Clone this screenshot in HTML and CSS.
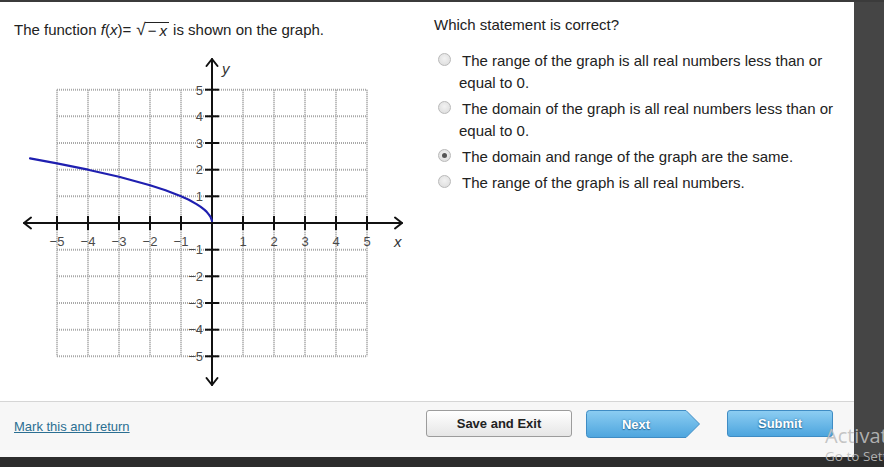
FILE: index.html
```html
<!DOCTYPE html>
<html lang="en">
<head>
<meta charset="utf-8">
<title>Question</title>
<link rel="stylesheet" href="styles.css">
</head>
<body>
<div class="screen">
  <div class="top">
    <div class="main">
      <div class="content">
        <div class="left">
          <p class="question">The function <i>f</i>(<i>x</i>)= <span class="sqrt"><span class="rad">√</span><span class="radicand">−&#8201;<i>x</i></span></span> is shown on the graph.</p>
          <svg class="graph" width="420" height="345" viewBox="0 50 420 345" xmlns="http://www.w3.org/2000/svg">
            <g stroke="#a9a9a9" stroke-width="2" stroke-dasharray="1 1" fill="none">
              <line x1="57" y1="87.7" x2="57" y2="354.3"/>
              <line x1="88" y1="87.7" x2="88" y2="354.3"/>
              <line x1="119" y1="87.7" x2="119" y2="354.3"/>
              <line x1="150" y1="87.7" x2="150" y2="354.3"/>
              <line x1="181" y1="87.7" x2="181" y2="354.3"/>
              <line x1="243" y1="87.7" x2="243" y2="354.3"/>
              <line x1="274" y1="87.7" x2="274" y2="354.3"/>
              <line x1="305" y1="87.7" x2="305" y2="354.3"/>
              <line x1="336" y1="87.7" x2="336" y2="354.3"/>
              <line x1="367" y1="87.7" x2="367" y2="354.3"/>
              <line x1="57" y1="87.7" x2="367" y2="87.7"/>
              <line x1="57" y1="114.3" x2="367" y2="114.3"/>
              <line x1="57" y1="141" x2="367" y2="141"/>
              <line x1="57" y1="167.7" x2="367" y2="167.7"/>
              <line x1="57" y1="194.3" x2="367" y2="194.3"/>
              <line x1="57" y1="247.7" x2="367" y2="247.7"/>
              <line x1="57" y1="274.3" x2="367" y2="274.3"/>
              <line x1="57" y1="301" x2="367" y2="301"/>
              <line x1="57" y1="327.7" x2="367" y2="327.7"/>
              <line x1="57" y1="354.3" x2="367" y2="354.3"/>
            </g>
            <g stroke="#111" stroke-width="2" fill="none" stroke-linecap="round" stroke-linejoin="round">
              <line x1="24" y1="221" x2="402" y2="221"/>
              <polyline points="31,215.5 24,221 31,226.5"/>
              <polyline points="395,215.5 402,221 395,226.5"/>
              <line x1="212" y1="57" x2="212" y2="383"/>
              <polyline points="206.5,64 212,57 217.5,64"/>
              <polyline points="206.5,376 212,383 217.5,376"/>
            </g>
            <g stroke="#111" stroke-width="2" fill="none">
              <line x1="57" y1="214" x2="57" y2="228"/>
              <line x1="88" y1="214" x2="88" y2="228"/>
              <line x1="119" y1="214" x2="119" y2="228"/>
              <line x1="150" y1="214" x2="150" y2="228"/>
              <line x1="181" y1="214" x2="181" y2="228"/>
              <line x1="243" y1="214" x2="243" y2="228"/>
              <line x1="274" y1="214" x2="274" y2="228"/>
              <line x1="305" y1="214" x2="305" y2="228"/>
              <line x1="336" y1="214" x2="336" y2="228"/>
              <line x1="367" y1="214" x2="367" y2="228"/>
              <line x1="205" y1="87.7" x2="219" y2="87.7"/>
              <line x1="205" y1="114.3" x2="219" y2="114.3"/>
              <line x1="205" y1="141" x2="219" y2="141"/>
              <line x1="205" y1="167.7" x2="219" y2="167.7"/>
              <line x1="205" y1="194.3" x2="219" y2="194.3"/>
              <line x1="205" y1="247.7" x2="219" y2="247.7"/>
              <line x1="205" y1="274.3" x2="219" y2="274.3"/>
              <line x1="205" y1="301" x2="219" y2="301"/>
              <line x1="205" y1="327.7" x2="219" y2="327.7"/>
              <line x1="205" y1="354.3" x2="219" y2="354.3"/>
            </g>
            <path d="M30,156.4 L57,161.4 L88,167.7 L119,174.8 L150,183.3 L165.5,188.3 L181,194.3 L188.8,197.7 L196.5,202.1 L200.4,204.7 L204.3,207.7 L206.5,209.6 L208.9,212.6 L210.5,214.8 L211.4,217.2 L212,219" fill="none" stroke="#1f1fb0" stroke-width="2.2" stroke-linejoin="round" stroke-linecap="round"/>
            <g class="tick-label" text-anchor="middle">
              <text x="57" y="244">−5</text>
              <text x="88" y="244">−4</text>
              <text x="119" y="244">−3</text>
              <text x="150" y="244">−2</text>
              <text x="181" y="244">−1</text>
              <text x="243" y="244">1</text>
              <text x="274" y="244">2</text>
              <text x="305" y="244">3</text>
              <text x="336" y="244">4</text>
              <text x="367" y="244">5</text>
            </g>
            <g class="tick-label" text-anchor="end">
              <text x="203" y="92.5">5</text>
              <text x="203" y="119">4</text>
              <text x="203" y="145.7">3</text>
              <text x="203" y="172.4">2</text>
              <text x="203" y="199">1</text>
              <text x="203" y="252.4">−1</text>
              <text x="203" y="279">−2</text>
              <text x="203" y="305.7">−3</text>
              <text x="203" y="332.4">−4</text>
              <text x="203" y="359">−5</text>
            </g>
            <text class="axis-label" x="222" y="72">y</text>
            <text class="axis-label" x="394" y="245">x</text>
          </svg>
        </div>
        <div class="right">
          <p class="prompt">Which statement is correct?</p>
          <div class="options">
            <div class="option">
              <span class="radio"></span>
              <span class="label">The range of the graph is all real numbers less than or equal to 0.</span>
            </div>
            <div class="option">
              <span class="radio"></span>
              <span class="label">The domain of the graph is all real numbers less than or equal to 0.</span>
            </div>
            <div class="option">
              <span class="radio checked"></span>
              <span class="label">The domain and range of the graph are the same.</span>
            </div>
            <div class="option">
              <span class="radio"></span>
              <span class="label">The range of the graph is all real numbers.</span>
            </div>
          </div>
        </div>
      </div>
      <div class="footer">
        <a class="mark" href="#">Mark this and return</a>
        <div class="buttons">
          <button class="btn save">Save and Exit</button>
          <button class="btn next">
            <svg class="next-shape" width="115" height="28" viewBox="0 0 115 28" xmlns="http://www.w3.org/2000/svg">
              <defs>
                <linearGradient id="blueg" x1="0" y1="0" x2="0" y2="1">
                  <stop offset="0" stop-color="#8ccdf2"/>
                  <stop offset="1" stop-color="#4da5de"/>
                </linearGradient>
              </defs>
              <path d="M3.5,0.5 H100 L113.5,14 L100,27.5 H3.5 Q0.5,27.5 0.5,24.5 V3.5 Q0.5,0.5 3.5,0.5 Z" fill="url(#blueg)" stroke="#3f8cc4" stroke-width="1"/>
            </svg>
            <span class="next-text">Next</span>
          </button>
          <button class="btn submit">Submit</button>
        </div>
      </div>
    </div>
    <div class="side"></div>
  </div>
  <div class="taskbar"></div>
  <div class="watermark">
    <span class="wm-big">Activate Windows</span>
    <span class="wm-small">Go to Settings to activate Windows.</span>
  </div>
</div>
</body>
</html>
```

FILE: styles.css
```css
* { box-sizing: border-box; }

html, body {
  margin: 0;
  padding: 0;
  background: #ffffff;
}

body {
  font-family: "Liberation Sans", Arial, sans-serif;
  color: #222;
}

.screen {
  width: 884px;
  height: 467px;
  overflow: hidden;
  position: relative;
  display: grid;
  grid-template-rows: 457px 10px;
}

.top {
  display: flex;
  border-top: 2px solid #3b3b3b;
}

.main {
  width: 854px;
  display: flex;
  flex-direction: column;
  background: #fff;
}

.side {
  flex: 1;
  background: #454545;
}

.taskbar {
  background: #2c2c2c;
}

.content {
  flex: 1;
  display: flex;
}

.left {
  width: 434px;
  padding: 18px 0 0 14px;
}

.question {
  margin: 0;
  font-size: 15px;
  line-height: 20px;
  height: 20px;
  color: #222;
}

.sqrt {
  display: inline-flex;
  align-items: flex-end;
  margin-left: 1px;
}

.rad {
  font-size: 17px;
  line-height: 18px;
}

.radicand {
  border-top: 1px solid #222;
  line-height: 16px;
  padding: 0 2px 0 3px;
  margin-left: -1px;
}

.graph {
  display: block;
  margin: 12px 0 0 -14px;
}

.tick-label {
  font-family: "Liberation Sans", Arial, sans-serif;
  font-size: 13px;
  fill: #4a4a4a;
}

.axis-label {
  font-family: "Liberation Sans", Arial, sans-serif;
  font-size: 15px;
  font-style: italic;
  fill: #333;
}

.right {
  flex: 1;
  padding: 13px 9px 0 0;
}

.prompt {
  margin: 0;
  font-size: 15px;
  line-height: 20px;
}

.options {
  margin-top: 15px;
  display: flex;
  flex-direction: column;
  gap: 4px;
}

.option {
  display: flex;
  align-items: flex-start;
}

.radio {
  flex: none;
  width: 13px;
  height: 13px;
  margin: 3px 0 0 4px;
  border-radius: 50%;
  border: 1px solid #b9b9b9;
  background: radial-gradient(circle at 50% 40%, #f2f2f2 0%, #dadada 100%);
  position: relative;
}

.radio.checked::after {
  content: "";
  position: absolute;
  left: 3px;
  top: 3px;
  width: 5px;
  height: 5px;
  border-radius: 50%;
  background: #555;
}

.label {
  margin-left: 8px;
  font-size: 15px;
  line-height: 22px;
  text-indent: 3px;
  color: #222;
}

.footer {
  height: 56px;
  border-top: 1px solid #d6d6d6;
  background: #f7f7f7;
  display: flex;
  align-items: flex-start;
  padding: 8px 21px 0 14px;
}

.mark {
  font-size: 13px;
  line-height: 27px;
  margin-top: 3px;
  color: #2b6f92;
  text-decoration: underline;
}

.buttons {
  margin-left: auto;
  display: flex;
}

.btn {
  height: 27px;
  font-family: "Liberation Sans", Arial, sans-serif;
  font-size: 13px;
  font-weight: bold;
  padding: 0;
  cursor: pointer;
}

.save {
  width: 146px;
  border: 1px solid #9c9c9c;
  border-radius: 3px;
  background: linear-gradient(#ffffff, #e6e6e6);
  color: #222;
}

.next {
  width: 115px;
  height: 28px;
  margin-left: 14px;
  border: none;
  background: transparent;
  position: relative;
  color: #fff;
}

.next-shape {
  position: absolute;
  left: 0;
  top: 0;
}

.next-text {
  position: relative;
  display: block;
  width: 100px;
  text-align: center;
  text-shadow: 0 0 2px #2a6f9f, 0 1px 1px #2a6f9f;
}

.submit {
  width: 106px;
  margin-left: 26px;
  border: 1px solid #3f8cc4;
  border-radius: 3px;
  background: linear-gradient(#8ccdf2, #4da5de);
  color: #fff;
  text-shadow: 0 0 2px #2a6f9f, 0 1px 1px #2a6f9f;
}

.watermark {
  position: absolute;
  left: 825px;
  top: 424px;
  display: flex;
  flex-direction: column;
  white-space: nowrap;
  font-family: "Open Sans", "DejaVu Sans", sans-serif;
  color: rgba(190, 190, 190, 0.9);
}

.wm-big {
  font-size: 20px;
  line-height: 24px;
}

.wm-small {
  font-size: 13.5px;
  line-height: 18px;
  margin-top: -1px;
}
```
